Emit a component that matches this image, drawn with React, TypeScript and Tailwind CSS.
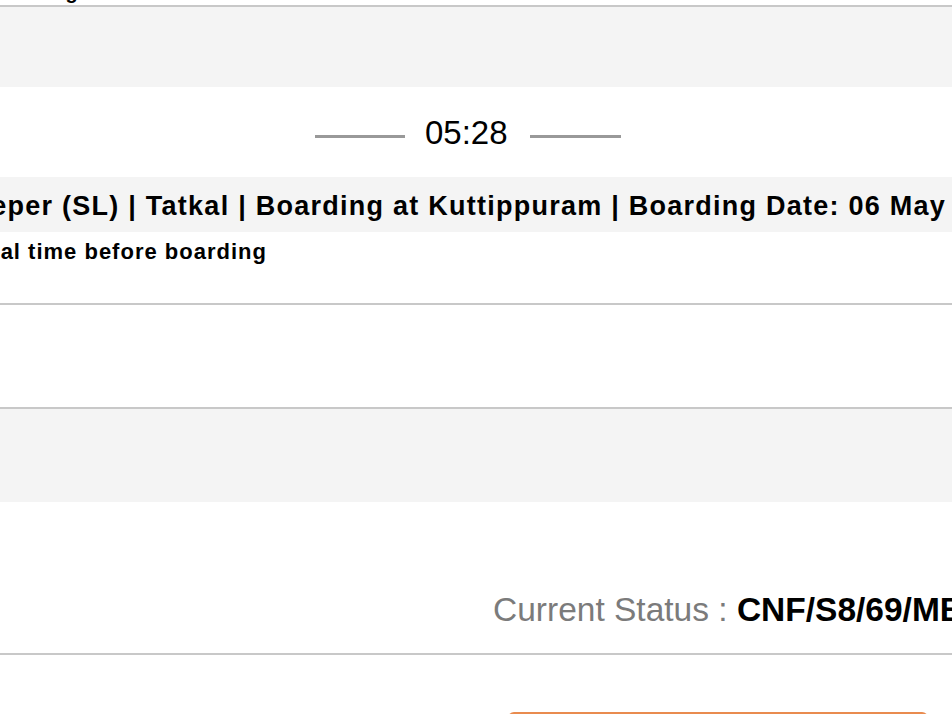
import React from "react";

const Divider = () => <div className="h-[2px] w-full bg-[#c8c8c8]" />;

const App = () => {
  return (
    <div
      className="w-[952px] h-[714px] overflow-hidden bg-white text-black"
      style={{ fontFamily: '"Liberation Sans", Arial, sans-serif' }}
    >
      {/* clipped heading above */}
      <div className="h-[5px] overflow-hidden">
        <p className="-mt-[20px] ml-[41px] whitespace-nowrap text-[20px] font-bold leading-[24px]">Log</p>
      </div>
      <Divider />
      <div className="h-[80px] bg-[#f4f4f4]" />

      {/* timer */}
      <div className="h-[90px] flex items-center pl-[315px] gap-[20px]">
        <span className="block h-[3px] w-[90px] bg-[#999999] mt-[8px]" />
        <span className="text-[33px] leading-none pr-[2px]">05:28</span>
        <span className="block h-[3px] w-[91px] bg-[#999999] mt-[8px]" />
      </div>

      {/* journey info */}
      <div className="h-[55px] bg-[#f4f4f4] flex items-center pt-[4px] overflow-hidden">
        <p className="ml-[-53px] whitespace-nowrap text-[27px] font-bold tracking-[1.25px] leading-none">
          Sleeper (SL) | Tatkal | Boarding at Kuttippuram | Boarding Date: 06 May 2024
        </p>
      </div>
      <div className="h-[71px] pt-[7px] overflow-hidden">
        <p className="ml-[-237px] whitespace-nowrap text-[22px] font-bold tracking-[1px] leading-[26px]">
          Please keep additional time before boarding
        </p>
      </div>
      <Divider />
      <div className="h-[102px]" />
      <Divider />
      <div className="h-[93px] bg-[#f4f4f4]" />

      {/* status */}
      <div className="h-[151px] flex items-end pb-[23px] pl-[493px] overflow-hidden">
        <p className="whitespace-nowrap text-[33.5px] leading-[40px]">
          <span className="text-[#7b7b7b]">Current Status : </span>
          <span className="font-bold">CNF/S8/69/MB</span>
        </p>
      </div>
      <Divider />
      <div className="pt-[57px] pl-[508px]">
        <div className="h-[48px] w-[420px] rounded-[6px] bg-[#e98b4f]" />
      </div>
    </div>
  );
};

export default App;
